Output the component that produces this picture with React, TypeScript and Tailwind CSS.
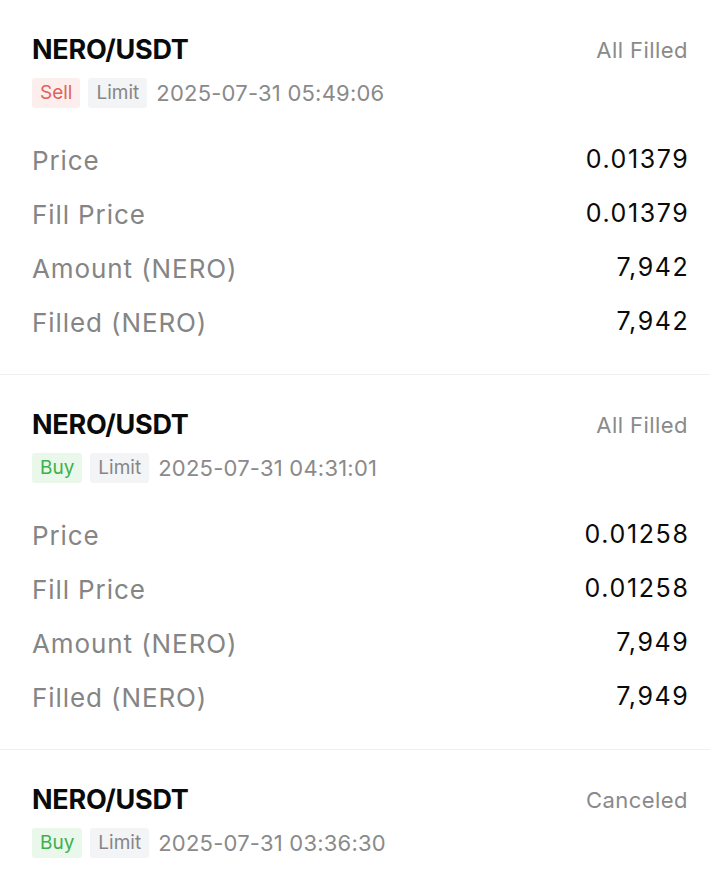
import { FC } from "react";

type Order = {
  pair: string;
  side: "Buy" | "Sell";
  type: string;
  time: string;
  status: string;
  details?: { label: string; value: string }[];
};

const orders: Order[] = [
  {
    pair: "NERO/USDT",
    side: "Sell",
    type: "Limit",
    time: "2025-07-31 05:49:06",
    status: "All Filled",
    details: [
      { label: "Price", value: "0.01379" },
      { label: "Fill Price", value: "0.01379" },
      { label: "Amount (NERO)", value: "7,942" },
      { label: "Filled (NERO)", value: "7,942" },
    ],
  },
  {
    pair: "NERO/USDT",
    side: "Buy",
    type: "Limit",
    time: "2025-07-31 04:31:01",
    status: "All Filled",
    details: [
      { label: "Price", value: "0.01258" },
      { label: "Fill Price", value: "0.01258" },
      { label: "Amount (NERO)", value: "7,949" },
      { label: "Filled (NERO)", value: "7,949" },
    ],
  },
  // last one is cut by the viewport, only its header shows
  { pair: "NERO/USDT", side: "Buy", type: "Limit", time: "2025-07-31 03:36:30", status: "Canceled" },
];

const Row: FC<{ label: string; value: string }> = ({ label, value }) => (
  <div className="flex h-[54px] items-center justify-between">
    <span className="text-[26px] tracking-[0.035em] text-[#858585]">{label}</span>
    <span className="-mr-[1.5px] text-[25px] tracking-[0.065em] text-[#0a0a0a]">{value}</span>
  </div>
);

const OrderCard: FC<{ order: Order }> = ({ order }) => {
  const isBuy = order.side === "Buy";
  return (
    <div className="border-b border-[#f0f0f0] pb-[25px] pl-[32px] pr-[22px] pt-[32px]">
      <div className="flex h-[36px] items-center justify-between">
        <span className="text-[27px] font-bold tracking-[-0.01em] text-[#0a0a0a]">{order.pair}</span>
        <span className="text-[22px] tracking-[0.02em] text-[#8a8a8a]">{order.status}</span>
      </div>
      <div className="mt-[10px] flex h-[30px] items-center gap-[8px]">
        <span
          className={
            isBuy
              ? "flex h-[30px] items-center rounded-[3px] bg-[#eaf8ec] px-[8px] text-[19px] text-[#3db04b]"
              : "flex h-[30px] items-center rounded-[3px] bg-[#fdeeee] px-[8px] text-[19px] text-[#e0625b]"
          }
        >
          {order.side}
        </span>
        <span className="flex h-[30px] items-center rounded-[3px] bg-[#f3f4f6] px-[8px] text-[19px] text-[#868686]">
          {order.type}
        </span>
        <span className="ml-[1px] text-[22px] tracking-[0.01em] text-[#8a8a8a]">{order.time}</span>
      </div>
      {order.details && (
        <div className="mt-[25px]">
          {order.details.map((d) => (
            <Row key={d.label} label={d.label} value={d.value} />
          ))}
        </div>
      )}
    </div>
  );
};

export default function App() {
  return (
    <div className="h-[874px] w-[710px] overflow-hidden bg-white font-['Inter','Liberation_Sans',sans-serif]">
      {orders.map((o, i) => (
        <OrderCard key={i} order={o} />
      ))}
    </div>
  );
}
